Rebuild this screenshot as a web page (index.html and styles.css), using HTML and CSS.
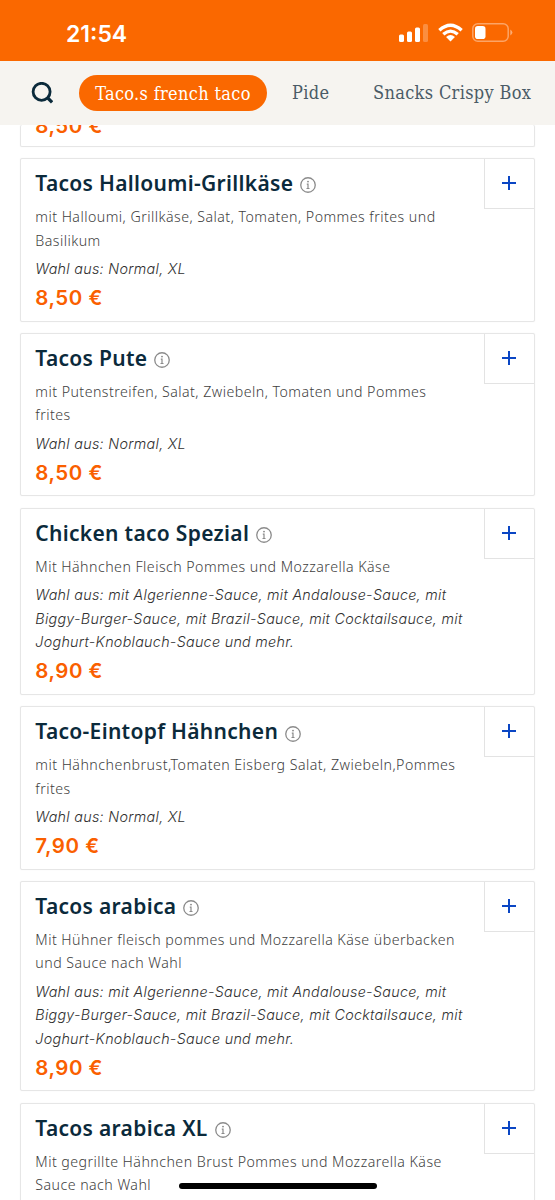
FILE: index.html
```html
<!DOCTYPE html>
<html lang="de">
<head>
<meta charset="utf-8">
<title>Speisekarte</title>
<link rel="stylesheet" href="styles.css">
</head>
<body>
<svg class="defs" aria-hidden="true">
  <symbol id="info" viewBox="0 0 16 16"><circle cx="8" cy="8" r="7.25" fill="none" stroke="#8b8b8b" stroke-width="1.3"/><circle cx="8" cy="4.6" r=".95" fill="#8b8b8b"/><path d="M6.8 7.2H8v4.1M6.5 11.5h3" fill="none" stroke="#8b8b8b" stroke-width="1.2"/></symbol>
  <symbol id="plus" viewBox="0 0 14 14"><path d="M7 0v14M0 7h14" stroke="#0a46c4" stroke-width="2"/></symbol>
</svg>
<div class="screen">
  <div class="status">
    <span class="time">21:54</span>
    <div class="indicators">
      <svg class="signal" viewBox="0 0 29 18"><g fill="#fff"><rect x="0" y="10.5" width="5" height="7.5" rx="1.5"/><rect x="8" y="7.5" width="5" height="10.5" rx="1.5"/><rect x="16" y="3.5" width="5" height="14.5" rx="1.5"/><rect x="24" y="0" width="5" height="18" rx="1.5" opacity=".25"/></g></svg>
      <svg class="wifi" viewBox="0 0 26 19"><g fill="none" stroke="#fff" stroke-width="3.4"><path d="M1.4 7.2Q13-3.3 24.6 7.2"/><path d="M5.5 11.4Q13 4.7 20.5 11.4"/></g><path d="M8.4 14.2Q13 10.2 17.6 14.2L13 18.8Z" fill="#fff"/></svg>
      <svg class="battery" viewBox="0 0 41 19"><rect x=".8" y=".8" width="35.4" height="17.4" rx="5" fill="none" stroke="#fff" stroke-opacity=".4" stroke-width="1.5"/><rect x="3" y="3" width="10.5" height="13" rx="2.8" fill="#fff"/><path d="M38.3 6.5q4.2 3 0 6Z" fill="#fff" opacity=".45"/></svg>
    </div>
  </div>
  <nav class="tabs">
    <svg class="search" viewBox="0 0 22 22"><circle cx="10.6" cy="9.8" r="8.5" fill="none" stroke="#0b2a3b" stroke-width="2.8"/><path d="M16.3 15.5l4.8 4.8" stroke="#0b2a3b" stroke-width="3.2"/></svg>
    <span class="tab active">Taco.s french taco</span>
    <span class="tab pide">Pide</span>
    <span class="tab snacks">Snacks Crispy Box</span>
  </nav>
  <main class="menu">
    <article class="card partial"><div class="price">8,50 €</div></article>
    <article class="card">
      <h2>Tacos Halloumi-Grillkäse<svg class="info"><use href="#info"/></svg></h2>
      <p class="desc">mit Halloumi, Grillkäse, Salat, Tomaten, Pommes frites und<br>Basilikum</p>
      <p class="choice">Wahl aus: Normal, XL</p>
      <div class="price">8,50 €</div>
      <div class="add"><svg><use href="#plus"/></svg></div>
    </article>
    <article class="card">
      <h2>Tacos Pute<svg class="info"><use href="#info"/></svg></h2>
      <p class="desc">mit Putenstreifen, Salat, Zwiebeln, Tomaten und Pommes<br>frites</p>
      <p class="choice">Wahl aus: Normal, XL</p>
      <div class="price">8,50 €</div>
      <div class="add"><svg><use href="#plus"/></svg></div>
    </article>
    <article class="card">
      <h2>Chicken taco Spezial<svg class="info"><use href="#info"/></svg></h2>
      <p class="desc">Mit Hähnchen Fleisch Pommes und Mozzarella Käse</p>
      <p class="choice">Wahl aus: mit Algerienne-Sauce, mit Andalouse-Sauce, mit<br>Biggy-Burger-Sauce, mit Brazil-Sauce, mit Cocktailsauce, mit<br>Joghurt-Knoblauch-Sauce und mehr.</p>
      <div class="price">8,90 €</div>
      <div class="add"><svg><use href="#plus"/></svg></div>
    </article>
    <article class="card">
      <h2>Taco-Eintopf Hähnchen<svg class="info"><use href="#info"/></svg></h2>
      <p class="desc">mit Hähnchenbrust,Tomaten Eisberg Salat, Zwiebeln,Pommes<br>frites</p>
      <p class="choice">Wahl aus: Normal, XL</p>
      <div class="price">7,90 €</div>
      <div class="add"><svg><use href="#plus"/></svg></div>
    </article>
    <article class="card">
      <h2>Tacos arabica<svg class="info"><use href="#info"/></svg></h2>
      <p class="desc">Mit Hühner fleisch pommes und Mozzarella Käse überbacken<br>und Sauce nach Wahl</p>
      <p class="choice">Wahl aus: mit Algerienne-Sauce, mit Andalouse-Sauce, mit<br>Biggy-Burger-Sauce, mit Brazil-Sauce, mit Cocktailsauce, mit<br>Joghurt-Knoblauch-Sauce und mehr.</p>
      <div class="price">8,90 €</div>
      <div class="add"><svg><use href="#plus"/></svg></div>
    </article>
    <article class="card">
      <h2>Tacos arabica XL<svg class="info"><use href="#info"/></svg></h2>
      <p class="desc">Mit gegrillte Hähnchen Brust Pommes und Mozzarella Käse<br>Sauce nach Wahl</p>
      <div class="add"><svg><use href="#plus"/></svg></div>
    </article>
  </main>
  <div class="home"></div>
</div>
</body>
</html>
```
FILE: styles.css
```css
* { box-sizing: border-box; }
body { margin: 0; background: #fff; font-family: "Noto Sans", sans-serif; }
.defs { position: absolute; width: 0; height: 0; }
.screen { position: relative; width: 555px; height: 1200px; overflow: hidden; display: flex; flex-direction: column; }
.status { flex: none; height: 61px; padding: 6px 42px 0 66px; background: #fa6800; display: flex; justify-content: space-between; align-items: center; }
.time { color: #fff; font: 600 23px/30px Inter, sans-serif; }
.indicators { display: flex; align-items: center; margin-top: -2px; }
.indicators svg { display: block; }
.signal { width: 29px; height: 18px; margin-right: 10px; }
.wifi { width: 25px; height: 19px; margin-right: 9px; }
.battery { width: 41px; height: 19px; }
.tabs { flex: none; height: 64px; padding: 0 0 0 31px; background: #f6f4f0; display: flex; align-items: center; white-space: nowrap; }
.search { width: 22px; height: 22px; margin-right: 26px; }
.tab { font: 300 18px/38px "Roboto Slab", "DejaVu Serif Condensed", "DejaVu Serif", serif; letter-spacing: .34px; color: #4a5b66; }
.active { width: 188px; height: 36px; border-radius: 18px; background: #fa6800; color: #fff; text-align: center; margin-right: 25px; }
.pide { width: 81px; }
.menu { flex: 1; min-height: 0; overflow: hidden; padding: 0 20px; display: flex; flex-direction: column; gap: 11.3px; }
.card { flex: none; position: relative; width: 515px; border: 1px solid #e6e6e6; border-radius: 2px; box-shadow: 0 0 1px #e6e6e6; padding: 9px 15px 0 14.3px; }
.card + .card { height: 163.6px; }
.card + .card:nth-child(4) { height: 187px; }
.card + .card:nth-child(6) { height: 210.3px; }
.card.partial { height: 21.7px; border-top: 0; padding-top: 0; }
.partial .price { margin-top: -14.5px; }
h2 { margin: 0; height: 30px; font-size: 21px; line-height: 30px; font-weight: 600; letter-spacing: .31px; color: #0b2a3b; white-space: nowrap; display: flex; align-items: center; }
.info { width: 16px; height: 16px; margin: 5px 0 0 7px; }
p { margin: 0; line-height: 23.35px; white-space: nowrap; }
.desc { margin-top: 7.2px; font-size: 14.2px; color: #404040; font-weight: 330; letter-spacing: .46px; }
.choice { margin-top: 5.1px; font-family: Inter, sans-serif; font-feature-settings: "cv11"; font-size: 14.3px; color: #303030; font-style: italic; font-weight: 300; letter-spacing: .3px; }
.price { margin-top: 2.6px; height: 29px; font-family: Inter, sans-serif; font-size: 20.5px; line-height: 29px; font-weight: 600; letter-spacing: .5px; color: #fa5f00; white-space: nowrap; }
.add { position: absolute; top: 0; right: 0; width: 50px; height: 50px; border-left: 1px solid #e3e3e3; border-bottom: 1px solid #e3e3e3; }
.add svg { display: block; width: 14px; height: 14px; margin: 17px 0 0 17px; }
.home { position: absolute; left: 179px; bottom: 11px; width: 198px; height: 6px; border-radius: 3px; background: #000; }
```
